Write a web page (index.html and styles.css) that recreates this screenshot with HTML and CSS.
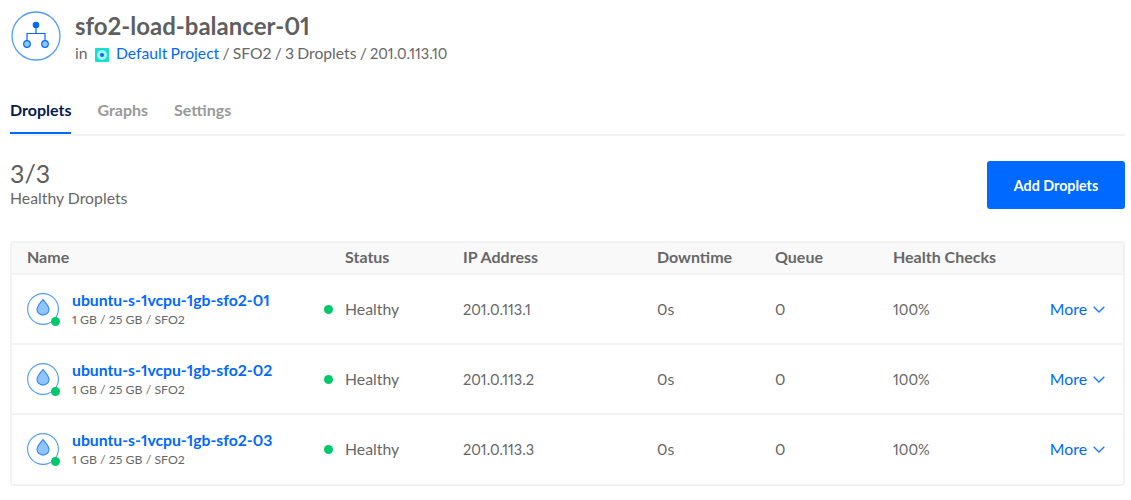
FILE: index.html
```html
<!DOCTYPE html>
<html lang="en">
<head>
<meta charset="utf-8">
<title>sfo2-load-balancer-01</title>
<link rel="stylesheet" href="styles.css">
</head>
<body>
<header class="head">
  <svg class="lb-icon" viewBox="0 0 50 50" width="50" height="50" aria-hidden="true">
    <circle cx="25" cy="25" r="24" fill="#fff" stroke="#4d9bff" stroke-width="1.3"/>
    <path d="M25 14V22.5M16 33V22.5H34V33" fill="none" stroke="#0069ff" stroke-width="1.2"/>
    <circle cx="25" cy="14" r="3.3" fill="#0069ff"/>
    <circle cx="16" cy="33" r="3.3" fill="#8fc4ff" stroke="#0069ff" stroke-width="1.2"/>
    <circle cx="34" cy="33" r="3.3" fill="#8fc4ff" stroke="#0069ff" stroke-width="1.2"/>
  </svg>
  <div>
    <h1 class="title">sfo2-load-balancer-01</h1>
    <p class="crumbs">in <span class="project-icon"><span class="project-dot"></span></span> <a class="link" href="#">Default Project</a> / SFO2 / 3 Droplets / <span class="num">201.0.113.10</span></p>
  </div>
</header>
<nav class="tabs">
  <a class="tab tab-active" href="#">Droplets</a>
  <a class="tab" href="#">Graphs</a>
  <a class="tab" href="#">Settings</a>
</nav>
<section class="summary">
  <div>
    <div class="count">3/3</div>
    <div class="count-label">Healthy Droplets</div>
  </div>
  <button class="add-btn">Add Droplets</button>
</section>
<section class="table">
  <div class="row row-head">
    <span class="span-name">Name</span><span>Status</span><span>IP Address</span><span>Downtime</span><span>Queue</span><span>Health Checks</span>
  </div>
  <div class="row">
    <div class="name">
      <span class="drop"><svg viewBox="0 0 32 32" width="32" height="32" aria-hidden="true"><circle cx="16" cy="16" r="15.4" fill="#fff" stroke="#4d9bff" stroke-width="1.1"/><path d="M16 6.5C13.5 10 10 13 10 16.5A6 5.6 0 0 0 22 16.5C22 13 18.5 10 16 6.5Z" fill="#8fc4ff" stroke="#2f86ff" stroke-width="1.1"/></svg><span class="drop-dot"></span></span>
      <div><a class="drop-name" href="#">ubuntu-s-1vcpu-1gb-sfo2-01</a><div class="drop-meta">1 GB / 25 GB / SFO2</div></div>
    </div>
    <span class="dot"></span><span>Healthy</span><span class="num cell-num">201.0.113.1</span><span>0s</span><span>0</span><span class="num cell-num">100%</span>
    <a class="more" href="#">More <svg viewBox="0 0 12 7" width="12" height="7" aria-hidden="true"><path d="M.7 .7L6 6L11.3 .7" fill="none" stroke="#1a78ff" stroke-width="1.3"/></svg></a>
  </div>
  <div class="row">
    <div class="name">
      <span class="drop"><svg viewBox="0 0 32 32" width="32" height="32" aria-hidden="true"><circle cx="16" cy="16" r="15.4" fill="#fff" stroke="#4d9bff" stroke-width="1.1"/><path d="M16 6.5C13.5 10 10 13 10 16.5A6 5.6 0 0 0 22 16.5C22 13 18.5 10 16 6.5Z" fill="#8fc4ff" stroke="#2f86ff" stroke-width="1.1"/></svg><span class="drop-dot"></span></span>
      <div><a class="drop-name" href="#">ubuntu-s-1vcpu-1gb-sfo2-02</a><div class="drop-meta">1 GB / 25 GB / SFO2</div></div>
    </div>
    <span class="dot"></span><span>Healthy</span><span class="num cell-num">201.0.113.2</span><span>0s</span><span>0</span><span class="num cell-num">100%</span>
    <a class="more" href="#">More <svg viewBox="0 0 12 7" width="12" height="7" aria-hidden="true"><path d="M.7 .7L6 6L11.3 .7" fill="none" stroke="#1a78ff" stroke-width="1.3"/></svg></a>
  </div>
  <div class="row">
    <div class="name">
      <span class="drop"><svg viewBox="0 0 32 32" width="32" height="32" aria-hidden="true"><circle cx="16" cy="16" r="15.4" fill="#fff" stroke="#4d9bff" stroke-width="1.1"/><path d="M16 6.5C13.5 10 10 13 10 16.5A6 5.6 0 0 0 22 16.5C22 13 18.5 10 16 6.5Z" fill="#8fc4ff" stroke="#2f86ff" stroke-width="1.1"/></svg><span class="drop-dot"></span></span>
      <div><a class="drop-name" href="#">ubuntu-s-1vcpu-1gb-sfo2-03</a><div class="drop-meta">1 GB / 25 GB / SFO2</div></div>
    </div>
    <span class="dot"></span><span>Healthy</span><span class="num cell-num">201.0.113.3</span><span>0s</span><span>0</span><span class="num cell-num">100%</span>
    <a class="more" href="#">More <svg viewBox="0 0 12 7" width="12" height="7" aria-hidden="true"><path d="M.7 .7L6 6L11.3 .7" fill="none" stroke="#1a78ff" stroke-width="1.3"/></svg></a>
  </div>
</section>
</body>
</html>
```
FILE: styles.css
```css
* { box-sizing: border-box; }
html, body { height: 100%; }
body {
  margin: 0;
  padding: 11px 6px 0 10px;
  background: #fff;
  color: #676767;
  font-family: "Lato", "Liberation Sans", sans-serif;
  font-size: 15.8px;
  font-variant-numeric: proportional-nums;
  overflow: hidden;
}
a { text-decoration: none; }
.num { font-size: 14.6px; }
.cell-num { padding-top: 2px; }
.head { display: flex; gap: 15px; height: 60px; }
.lb-icon { flex: none; margin-left: 1px; }
.title { margin: 0 0 0 -1px; font-size: 24px; line-height: 30px; font-weight: 700; color: #5f5f5f; }
.crumbs { margin: 1px 0 0 -1px; font-size: 15.7px; line-height: 22px; color: #676767; word-spacing: -0.8px; }
.link { color: #0069ff; }
.project-icon {
  display: inline-flex; align-items: center; justify-content: center;
  width: 14px; height: 14px; margin: 0 4px 0 4px; vertical-align: -1px;
  background: #15e0d0; border-radius: 1px;
}
.project-dot { width: 10px; height: 10px; border-radius: 50%; border: 3px solid #a5f5f0; background-color: #0069ff; }
.tabs { display: flex; gap: 26px; height: 65px; padding-top: 27px; border-bottom: 2px solid #f2f2f2; }
.tab { height: 36px; line-height: 24px; font-size: 16px; font-weight: 700; color: #999; }
.tab-active { color: #031b4e; border-bottom: 2px solid #0069ff; }
.summary { display: flex; justify-content: space-between; padding-top: 25px; height: 105px; }
.count { font-size: 25px; line-height: 25px; color: #5f5f5f; }
.count-label { margin-top: 1px; line-height: 22px; color: #676767; }
.add-btn {
  width: 138px; height: 48px; border: 0; border-radius: 3px;
  background: #0069ff; color: #fff; font: 700 14.3px "Lato", "Liberation Sans", sans-serif;
}
.table { border: 2px solid #f2f2f2; border-radius: 4px; }
.row {
  display: grid;
  grid-template-columns: 297px 21px 118px 194px 118px 118px 1fr auto;
  align-items: center;
  height: 70px;
  padding: 0 18px 0 15px;
  border-bottom: 2px solid #f2f2f2;
  line-height: 18px;
}
.row:last-child { margin-bottom: -1px; border-bottom-color: transparent; }
.row-head { height: 32px; padding-bottom: 3px; background: #f9f9f9; font-size: 16px; font-weight: 700; color: #676767; border-radius: 3px 3px 0 0; }
.span-name { grid-column: 1 / 3; }
.name { display: flex; align-items: center; gap: 13px; }
.drop { position: relative; display: block; width: 32px; height: 32px; flex: none; }
.drop svg { display: block; }
.drop-dot { position: absolute; right: -1px; bottom: -1px; width: 9px; height: 9px; border-radius: 50%; background: #00c86b; }
.drop-name { display: block; margin-bottom: 3px; color: #0069ff; font-weight: 700; font-size: 15.75px; line-height: 18px; }
.drop-meta { font-size: 12.3px; line-height: 16px; color: #676767; }
.dot { width: 9px; height: 9px; border-radius: 50%; background: #00c86b; }
.more { display: flex; align-items: center; gap: 6px; color: #0069ff; }
```
